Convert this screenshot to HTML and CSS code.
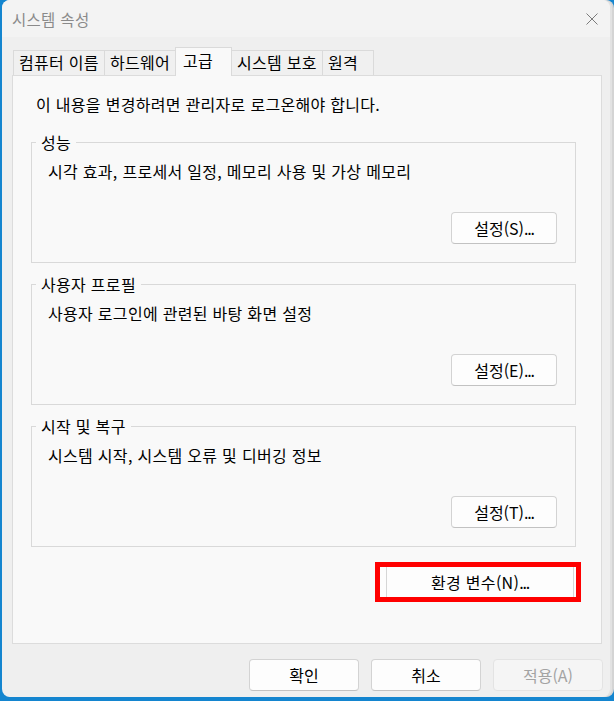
FILE: index.html
```html
<!DOCTYPE html>
<html lang="ko">
<head>
<meta charset="utf-8">
<title>시스템 속성</title>
<link rel="stylesheet" href="styles.css">
</head>
<body>
<div class="window">
  <div class="titlebar">
    <span class="title">시스템 속성</span>
    <svg class="close" width="12" height="12" viewBox="0 0 12 12" aria-hidden="true">
      <path d="M0.5 0.5 L11.5 11.5 M11.5 0.5 L0.5 11.5" stroke="#7b7b7b" stroke-width="1" fill="none"/>
    </svg>
  </div>
  <div class="content">
    <div class="tabs">
      <div class="tab t1">컴퓨터 이름</div>
      <div class="tab t2">하드웨어</div>
      <div class="tab t3 selected">고급</div>
      <div class="tab t4">시스템 보호</div>
      <div class="tab t5">원격</div>
    </div>
    <div class="panel">
      <p class="note">이 내용을 변경하려면 관리자로 로그온해야 합니다.</p>
      <fieldset class="group">
        <legend>성능</legend>
        <p class="desc">시각 효과, 프로세서 일정, 메모리 사용 및 가상 메모리</p>
        <div class="btnrow"><button class="btn">설정(S)<span class="dots">...</span></button></div>
      </fieldset>
      <fieldset class="group">
        <legend>사용자 프로필</legend>
        <p class="desc">사용자 로그인에 관련된 바탕 화면 설정</p>
        <div class="btnrow"><button class="btn">설정(E)<span class="dots">...</span></button></div>
      </fieldset>
      <fieldset class="group">
        <legend>시작 및 복구</legend>
        <p class="desc">시스템 시작, 시스템 오류 및 디버깅 정보</p>
        <div class="btnrow"><button class="btn">설정(T)<span class="dots">...</span></button></div>
      </fieldset>
      <div class="envrow">
        <div class="highlight"><button class="btn env">환경 변수(N)<span class="dots">...</span></button></div>
      </div>
    </div>
    <div class="footer">
      <button class="btn wide">확인</button>
      <button class="btn wide">취소</button>
      <button class="btn wide disabled">적용(A)</button>
    </div>
  </div>
</div>
</body>
</html>
```

FILE: styles.css
```css
html, body {
  margin: 0;
  padding: 0;
}
body {
  width: 614px;
  height: 701px;
  background: #1485cf;
  font-family: "Noto Sans CJK KR", "Noto Sans", sans-serif;
  font-size: 16px;
  letter-spacing: 0.3px;
  color: #000;
  overflow: hidden;
}
.window {
  margin-left: 2px;
  width: 608px;
  height: 697px;
  background: #efefef;
  border-radius: 8px;
  overflow: hidden;
  box-shadow: 2px 0 0 0 #e2e2e2, 4px 0 0 0 #d4d4d4;
}
.titlebar {
  height: 37px;
  background: #f3f3f3;
  display: flex;
  align-items: center;
  padding-left: 10px;
  padding-right: 12px;
}
.title {
  color: #8a8a8a;
  font-size: 15.5px;
  line-height: 20px;
}
.close {
  margin-left: auto;
  display: block;
}
.content {
  padding-left: 10px;
  padding-right: 8px;
}
.tabs {
  display: flex;
  align-items: flex-end;
  margin-top: 10px;
  margin-left: 1px;
  height: 28px;
  position: relative;
  z-index: 1;
}
.tab {
  box-sizing: border-box;
  height: 25px;
  border: 1px solid #dadada;
  border-bottom: none;
  border-right: none;
  background: #f0f0f0;
  padding-left: 5px;
  line-height: 22px;
  white-space: nowrap;
}
.t1 { width: 91px; }
.t2 { width: 71px; }
.t3 { width: 57px; }
.t4 { width: 90px; border-left: none; padding-left: 5px; }
.t5 { width: 52px; border-right: 1px solid #dadada; }
.tab.selected {
  height: 29px;
  margin-bottom: -1px;
  background: #f9f9f9;
  border-right: 1px solid #dadada;
  padding-left: 7px;
  line-height: 24px;
}
.panel {
  box-sizing: border-box;
  height: 569px;
  background: #f9f9f9;
  border: 1px solid #dcdcdc;
  padding: 0 20px 0 18px;
}
.note {
  margin: 18px 0 0 5px;
  line-height: 20px;
}
.group {
  margin: 18px 0 0 0;
  padding: 0 18px 18px 16px;
  width: 545px;
  box-sizing: border-box;
  border: 1px solid #d9d9d9;
  min-inline-size: 0;
}
.group + .group {
  margin-top: 11px;
}
.group legend {
  margin-left: -12px;
  padding: 0 5px;
  line-height: 20px;
}
.desc {
  margin: 9px 0 0 0;
  line-height: 20px;
}
.btnrow {
  display: flex;
  justify-content: flex-end;
  margin-top: 31px;
}
.btn {
  box-sizing: border-box;
  width: 106px;
  height: 32px;
  font-family: inherit;
  font-size: 16px;
  letter-spacing: 0;
  color: #000;
  background: #fdfdfd;
  border: 1px solid #d3d3d3;
  border-bottom-color: #c2c2c2;
  border-radius: 4px;
  padding: 0;
  line-height: 28px;
}
.dots {
  letter-spacing: -1.2px;
}
.envrow {
  display: flex;
  justify-content: flex-end;
  margin-top: 15px;
}
.highlight {
  box-sizing: border-box;
  width: 206px;
  height: 40px;
  border: 5px solid #ff0000;
  background: #fdfdfd;
  display: flex;
  padding-left: 6px;
}
.btn.env {
  width: 188px;
  height: 30px;
  border-radius: 0;
  border-top: none;
  border-bottom: none;
  border-left-color: #d6d6d6;
  border-right-color: #d6d6d6;
  letter-spacing: 0.3px;
}
.footer {
  display: flex;
  justify-content: flex-end;
  gap: 12px;
  margin-top: 15px;
  margin-right: -1px;
}
.btn.wide {
  width: 110px;
}
.btn.disabled {
  background: #f5f5f5;
  color: #a3a3a3;
  border-color: #e3e3e3;
}
```
